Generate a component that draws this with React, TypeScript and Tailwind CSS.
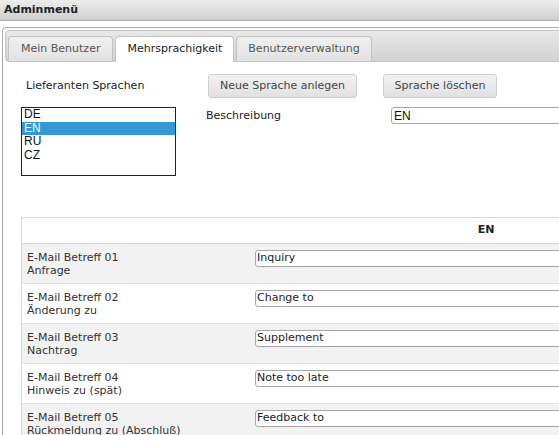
const rows = [
  { no: '01', label: 'Anfrage', value: 'Inquiry' },
  { no: '02', label: 'Änderung zu', value: 'Change to' },
  { no: '03', label: 'Nachtrag', value: 'Supplement' },
  { no: '04', label: 'Hinweis zu (spät)', value: 'Note too late' },
  { no: '05', label: 'Rückmeldung zu (Abschluß)', value: 'Feedback to' },
];

const languages = ['DE', 'EN', 'RU', 'CZ'];

export default function App() {
  return (
    <div className="w-[559px] h-[435px] overflow-hidden bg-white text-[#333] font-['DejaVu_Sans',Verdana,sans-serif] text-[10px]">
      {/* Title bar */}
      <div className="h-[21px] bg-gradient-to-b from-[#ededed] to-[#cfcfcf] border-b border-[#b0b0b0] pl-[4px] flex items-center">
        <span className="font-bold text-[11px] text-[#222]">Adminmenü</span>
      </div>

      {/* Panel */}
      <div className="mt-[6px] ml-[2px] w-[640px] h-[500px] border border-[#a8a8a8] rounded-tl-[4px] p-[2px]">
        {/* Tab bar */}
        <div className="h-[32px] rounded-[4px] border border-[#c4c4c4] bg-gradient-to-b from-[#e9e9e9] to-[#d2d2d2] flex items-end pl-[2px] gap-[2px]">
          <div className="h-[25px] px-[12px] flex items-center rounded-t-[4px] border border-b-0 border-[#c2c2c2] bg-gradient-to-b from-[#f0f0f0] to-[#e2e2e2] text-[11px] text-[#555]">
            Mein Benutzer
          </div>
          <div className="h-[26px] px-[11px] flex items-center rounded-t-[4px] border border-b-0 border-[#c2c2c2] bg-white text-[11px] text-[#222] -mb-px">
            Mehrsprachigkeit
          </div>
          <div className="h-[25px] px-[11px] flex items-center rounded-t-[4px] border border-b-0 border-[#c2c2c2] bg-gradient-to-b from-[#f0f0f0] to-[#e2e2e2] text-[11px] text-[#555]">
            Benutzerverwaltung
          </div>
        </div>

        {/* Content */}
        <div className="pl-[16px]">
          <div className="mt-[12px] flex items-center h-[24px]">
            <div className="w-[187px] pl-[5px] text-[11px] text-[#222]">Lieferanten Sprachen</div>
            <button className="h-[24px] w-[149px] rounded-[3px] border border-[#cfcfcf] bg-gradient-to-b from-[#f2f2f2] to-[#e1e1e1] text-[11px] text-[#444]">
              Neue Sprache anlegen
            </button>
            <button className="ml-[26px] h-[24px] w-[114px] rounded-[3px] border border-[#cfcfcf] bg-gradient-to-b from-[#f2f2f2] to-[#e1e1e1] text-[11px] text-[#444]">
              Sprache löschen
            </button>
          </div>

          <div className="mt-[9px] flex items-start">
            <div className="w-[155px] h-[69px] border border-[#222] font-['Liberation_Sans',Arial,sans-serif] text-[12px] leading-[13.5px] text-[#111]">
              {languages.map((l) => (
                <div key={l} className={l === 'EN' ? 'bg-[#3399d6] text-white pl-[2px]' : 'pl-[2px]'}>
                  {l}
                </div>
              ))}
            </div>
            <div className="ml-[30px] w-[185px] pt-[1px] text-[11px] text-[#222]">Beschreibung</div>
            <div className="h-[17px] w-[200px] border border-[#a6a6a6] rounded-l-[3px] pl-[2px] flex items-center font-['Liberation_Sans',Arial,sans-serif] text-[12px] text-[#111]">
              EN
            </div>
          </div>

          {/* Table */}
          <div className="mt-[41px] w-[700px] border-t border-l border-[#d8d8d8]">
            <div className="h-[26px] flex border-b border-[#d8d8d8]">
              <div className="w-[229px]" />
              <div className="flex-1 flex items-center justify-center font-bold text-[11px] text-[#222]">EN</div>
            </div>
            {rows.map((r, i) => (
              <div
                key={r.no}
                className={`h-[40px] flex border-b border-[#e2e2e2] ${i % 2 === 0 ? 'bg-[#f2f2f2]' : 'bg-white'}`}
              >
                <div className="w-[233px] pl-[5px] pt-[7px] text-[11px] leading-[13px] text-[#333]">
                  <div>E-Mail Betreff {r.no}</div>
                  <div>{r.label}</div>
                </div>
                <div className="pt-[6px]">
                  <div className="h-[17px] w-[400px] border border-[#a6a6a6] rounded-l-[3px] bg-white pl-[1px] flex items-center text-[11px] text-[#222]">
                    {r.value}
                  </div>
                </div>
              </div>
            ))}
          </div>
        </div>
      </div>
    </div>
  );
}
